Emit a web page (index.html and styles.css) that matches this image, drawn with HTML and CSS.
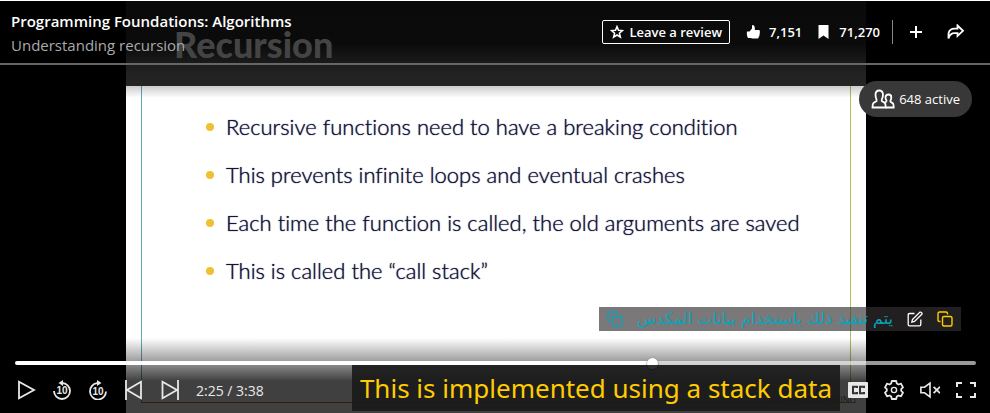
FILE: index.html
```html
<!DOCTYPE html>
<html lang="en">
<head>
<meta charset="utf-8">
<title>Programming Foundations: Algorithms</title>
<link rel="stylesheet" href="styles.css">
</head>
<body>
<main class="player">
  <section class="video">
    <div class="slide">
      <h2 class="slide-title">Recursion</h2>
      <div class="slide-body">
        <ul class="points">
          <li>Recursive functions need to have a breaking condition</li>
          <li>This prevents infinite loops and eventual crashes</li>
          <li>Each time the function is called, the old arguments are saved</li>
          <li>This is called the “call stack”</li>
        </ul>
        <p class="brand">Linked in LEARNING</p>
      </div>
    </div>
  </section>

  <div class="overlay">
    <header class="topbar">
      <div class="titles">
        <h1>Programming Foundations: Algorithms</h1>
        <p>Understanding recursion</p>
      </div>
      <div class="actions">
        <button class="review" type="button">
          <svg width="14" height="14" viewBox="0 0 14 14" fill="none" stroke="currentColor" stroke-width="1.5"><path d="M7 1.6 8.5 5.3 12.500 5.600 9.400 8.200 10.400 12.200 7 10 3.600 12.200 4.600 8.200 1.500 5.600 5.500 5.300Z"/></svg>
          Leave a review
        </button>
        <button class="count" type="button">
          <svg width="15" height="16" viewBox="0 0 15 16" fill="currentColor"><path d="M1 7.500H3.500L6 4.500V1.500Q6.500.8 7.500 1.200Q8.800 2 8.800 4V6H13Q14.200 6.300 13.800 7.500V8.500Q14 9.500 13.500 10V11.500Q13.500 12.300 12.800 12.500Q12.800 14.500 11.500 14.500H6.500L4.500 14H2Q.8 12 .8 9.500Z"/></svg>
          7,151
        </button>
        <button class="count" type="button">
          <svg width="11" height="16" viewBox="0 0 11 16" fill="currentColor"><path d="M.5 1H10.500V15L5.500 11.500.5 15Z"/></svg>
          71,270
        </button>
        <span class="divider"></span>
        <button class="icon" type="button" aria-label="Add">
          <svg width="14" height="14" viewBox="0 0 14 14" fill="none" stroke="currentColor" stroke-width="2"><path d="M7 1V13M1 7H13"/></svg>
        </button>
        <button class="icon" type="button" aria-label="Share">
          <svg width="18" height="16" viewBox="0 0 18 16" fill="none" stroke="currentColor" stroke-width="1.800"><path d="M10.500 1.500 16 6.800 10.500 12V9.200H7.500Q3 9.200 1.500 14.500V9.500Q2.500 4.700 7.500 4.700H10.500Z"/></svg>
        </button>
      </div>
    </header>

    <button class="active-users" type="button">
      <svg width="24" height="20" viewBox="0 0 24 20" fill="none" stroke="currentColor" stroke-width="1.800"><path d="M5.500 10.500Q4.500 8.500 4.500 5.500Q4.700 1.500 8.200 1.500T12 5.500Q12 8.500 10.800 10.500V12L13.800 14Q14.700 14.800 14.700 18.500H1.500Q1.500 14.800 2.500 14L5.500 12Z"/><path d="M15.500 12.500V11.500Q14.500 10 14.500 8.200Q14.700 5.500 17.500 5.500T20.300 8.200Q20.300 10 19.500 11.500V12.700L22 14.500Q22.700 15.500 22.700 18.500H14.500M15.500 12.500 14 13.500"/></svg>
      648 active
    </button>

    <div class="translation">
      <button class="icon cyan" type="button" aria-label="Copy translation">
        <svg width="16" height="16" viewBox="0 0 16 16" fill="none" stroke="currentColor" stroke-width="1.400"><rect x="5.500" y="5.500" width="9.500" height="9.500" rx="1.500"/><path d="M3.500 10.500H2.500Q1 10.500 1 9V2.500Q1 1 2.500 1H9Q10.500 1 10.500 2.500V3.500"/></svg>
      </button>
      <p lang="ar" dir="rtl">يتم تنفيذ ذلك باستخدام بيانات المكدس</p>
      <button class="icon" type="button" aria-label="Edit translation">
        <svg width="16" height="16" viewBox="0 0 16 16" fill="none" stroke="currentColor" stroke-width="1.300"><path d="M7.500 2.500H2.500Q1.200 2.500 1.200 3.800V13.500Q1.200 14.800 2.500 14.800H12.500Q13.800 14.800 13.800 13.500V8.500"/><path d="M5.500 8.500 12.800 1.200Q13.800.8 14.600 1.600T14.800 3.300L7.500 10.500 4.800 11.200Z"/></svg>
      </button>
      <button class="icon yellow" type="button" aria-label="Copy caption">
        <svg width="16" height="16" viewBox="0 0 16 16" fill="none" stroke="currentColor" stroke-width="1.400"><rect x="5.500" y="5.500" width="9.500" height="9.500" rx="1.500"/><path d="M3.500 10.500H2.500Q1 10.500 1 9V2.500Q1 1 2.500 1H9Q10.500 1 10.500 2.500V3.500"/></svg>
      </button>
    </div>

    <div class="dock">
      <input class="seek" type="range" min="0" max="218" value="145" aria-label="Seek">
      <div class="controls">
        <button class="icon" type="button" aria-label="Play">
          <svg width="20" height="20" viewBox="0 0 20 20" fill="none" stroke="currentColor" stroke-width="1.800"><path d="M3 1.800V18.200L18 10Z"/></svg>
        </button>
        <button class="icon" type="button" aria-label="Back 10 seconds">
          <svg width="20" height="20" viewBox="0 0 20 20" fill="none" stroke="currentColor" stroke-width="1.800"><path d="M2 11A8 8 0 1 0 10 3H8"/><path d="M11 0 6.500 3 11 6Z" fill="currentColor" stroke="none"/><text x="10" y="14">10</text></svg>
        </button>
        <button class="icon" type="button" aria-label="Forward 10 seconds">
          <svg width="20" height="20" viewBox="0 0 20 20" fill="none" stroke="currentColor" stroke-width="1.800"><path d="M18 11.500A8 8.200 0 1 1 9 3.200H12"/><path d="M9 0 13.500 3 9 6Z" fill="currentColor" stroke="none"/><text x="10" y="15">10</text></svg>
        </button>
        <button class="icon" type="button" aria-label="Previous">
          <svg width="20" height="20" viewBox="0 0 20 20" fill="none" stroke="currentColor" stroke-width="1.800"><path d="M2 0V20M17 1.800V18.200L3 10Z"/></svg>
        </button>
        <button class="icon" type="button" aria-label="Next">
          <svg width="20" height="20" viewBox="0 0 20 20" fill="none" stroke="currentColor" stroke-width="1.800"><path d="M18 0V20M2.500 1.800V18.200L17 10Z"/></svg>
        </button>
        <span class="time">2:25 / 3:38</span>
        <button class="speed" type="button">0.75x</button>
        <button class="icon" type="button" aria-label="Captions">
          <svg width="20" height="16" viewBox="0 0 20 16"><rect width="20" height="16" rx="1" fill="currentColor"/><path d="M9 6V4.800H5V11.200H9V10M16 6V4.800H12V11.200H16V10" fill="none" stroke="#333" stroke-width="2"/></svg>
        </button>
        <button class="icon" type="button" aria-label="Settings">
          <svg width="20" height="20" viewBox="0 0 20 20" fill="none" stroke="currentColor" stroke-width="1.800" stroke-linejoin="round"><path d="M7.800 1H12.200L12.800 3.500 14.500 4.500 17 3.700 19 7.400 17.200 9.200V10.800L19 12.600 17 16.300 14.500 15.500 12.800 16.500 12.200 19H7.800L7.200 16.500 5.500 15.500 3 16.300 1 12.600 2.800 10.800V9.200L1 7.400 3 3.700 5.500 4.500 7.200 3.500Z"/><circle cx="10" cy="10" r="2.600" stroke-width="1.400"/></svg>
        </button>
        <button class="icon unmute" type="button" aria-label="Unmute">
          <svg width="22" height="18" viewBox="0 0 22 18" fill="none" stroke="currentColor" stroke-width="1.800"><path d="M1 6H5L11 1.500V16.500L5 12H1Z"/><path stroke-width="2" d="M15 5.500 22 12.500M22 5.500 15 12.500"/></svg>
        </button>
        <button class="icon" type="button" aria-label="Full screen">
          <svg width="20" height="16" viewBox="0 0 20 16" fill="none" stroke="currentColor" stroke-width="2"><path d="M1 5V1H6M14 1H19V5M19 11V15H14M6 15H1V11"/></svg>
        </button>
      </div>
      <p class="caption">This is implemented using a stack data</p>
    </div>
  </div>
</main>
</body>
</html>
```
FILE: styles.css
```css
* { box-sizing: border-box; }
body {
  margin: 0;
  padding-top: 1px;
  background: #fff;
  color: #fff;
  font-family: "Open Sans", "Noto Sans", sans-serif;
}
h1, h2, p, ul { margin: 0; padding: 0; }
button { margin: 0; padding: 0; border: 0; background: none; color: inherit; font: inherit; }
svg { display: block; }
.icon { display: flex; }

.player {
  display: grid;
  min-height: calc(100vh - 1px);
  background: #000;
  overflow: hidden;
}
.video, .overlay { grid-area: 1 / 1; min-width: 0; }

.video { display: flex; padding: 0 124px 0 126px; }
.slide {
  flex: 1;
  display: flex;
  flex-direction: column;
  background: #fff;
}
.slide-title {
  height: 85px;
  padding: 20px 48px;
  background: linear-gradient(#0a0a0a, #0b0b0b 50%, #222 85%, #262425);
  color: #444;
  font: 900 36px/46px Lato, sans-serif;
}
.slide-body {
  flex: 1;
  display: flex;
  flex-direction: column;
  justify-content: space-between;
  margin: 0 15px 10px;
  border: solid;
  border-width: 0 1px 1px;
  border-color: #9fbf60 #a9c25a #b8860b #5fa9bb;
}
.points {
  padding: 17px 24px 0 64px;
  list-style: none;
  color: #14133a;
  font: 300 22px/48px Lato, sans-serif;
  font-variant-ligatures: none;
  text-shadow: 0 0 1px #14133a;
}
.points li { display: flex; align-items: center; gap: 12px; }
.points li::before {
  content: "";
  width: 8px;
  height: 8px;
  border-radius: 50%;
  background: #efc030;
}
.brand {
  margin: 0 -6px -4px 0;
  color: #777;
  text-align: right;
  font-size: 9px;
  line-height: 12px;
}

.overlay {
  position: relative;
  display: flex;
  flex-direction: column;
  background: linear-gradient(rgba(0,0,0,0) 85px, rgba(0,0,0,.2) 85px, rgba(0,0,0,0) 97px);
}
.topbar {
  display: flex;
  justify-content: space-between;
  height: 64px;
  padding: 8px 25px 0 11px;
  border-bottom: 2px solid #666;
}
.titles h1 { font-size: 15px; line-height: 24px; font-weight: 600; }
.titles p { color: #aaa; font-size: 15px; line-height: 24px; }
.actions {
  display: flex;
  align-items: center;
  height: 46px;
  font-size: 13px;
  font-weight: 600;
}
.review {
  display: flex;
  align-items: center;
  gap: 5px;
  height: 24px;
  margin-right: 16px;
  padding: 0 7px;
  border: 1px solid #fff;
  border-radius: 2px;
}
.count { display: flex; align-items: center; gap: 8px; margin-right: 16px; }
.count + .count { margin-right: 12px; gap: 10px; }
.divider { width: 1px; height: 24px; margin-right: 16px; background: #888; }
.divider + .icon { margin-right: 24px; }

.active-users {
  display: flex;
  align-items: center;
  align-self: flex-end;
  gap: 4px;
  height: 36px;
  margin: 16px 18px 0 0;
  padding: 0 12px;
  border-radius: 18px;
  background: #383838;
  font-size: 13px;
}

.translation {
  display: flex;
  align-items: center;
  align-self: flex-end;
  gap: 14px;
  height: 24px;
  margin: auto 29px 0 0;
  padding: 0 8px;
  background: rgba(50,47,48,.65);
}
.translation p {
  color: #08a4bc;
  font-family: "DejaVu Sans", sans-serif;
  font-size: 16px;
  line-height: 24px;
}
.cyan { color: #08a4bc; }
.yellow { color: #fc0; }

.dock {
  position: relative;
  padding: 30px 14px 0 15px;
  background: linear-gradient(rgba(0,0,0,0) 7px, rgba(0,0,0,.38) 30px, rgba(0,0,0,.5) 36px, rgba(0,0,0,.75) 50px);
}
.seek {
  display: block;
  width: 100%;
  height: 4px;
  margin: 0;
  border-radius: 2px;
  appearance: none;
  background: linear-gradient(90deg, #fff 66%, rgba(255,255,255,.6) 66%);
}
.seek::-webkit-slider-thumb {
  appearance: none;
  width: 11px;
  height: 11px;
  border-radius: 50%;
  background: #fff;
  box-shadow: 0 1px 2px rgba(0,0,0,.8);
}
.controls {
  display: flex;
  align-items: center;
  gap: 16px;
  height: 48px;
  padding: 2px 0 0 1px;
  color: #e8e8e8;
}
.controls text {
  fill: currentColor;
  stroke: none;
  font: 700 10px "Liberation Sans", sans-serif;
  text-anchor: middle;
}
.time { font-size: 14px; }
.unmute { width: 20px; }
.speed { margin-left: auto; color: #888; font-size: 13px; font-weight: 600; }

.caption {
  position: absolute;
  top: 34px;
  right: 150px;
  padding: 0 8px;
  background: rgba(26,26,26,.9);
  color: #fc0;
  font-family: "Noto Sans", sans-serif;
  font-size: 26px;
  line-height: 46px;
}
```
